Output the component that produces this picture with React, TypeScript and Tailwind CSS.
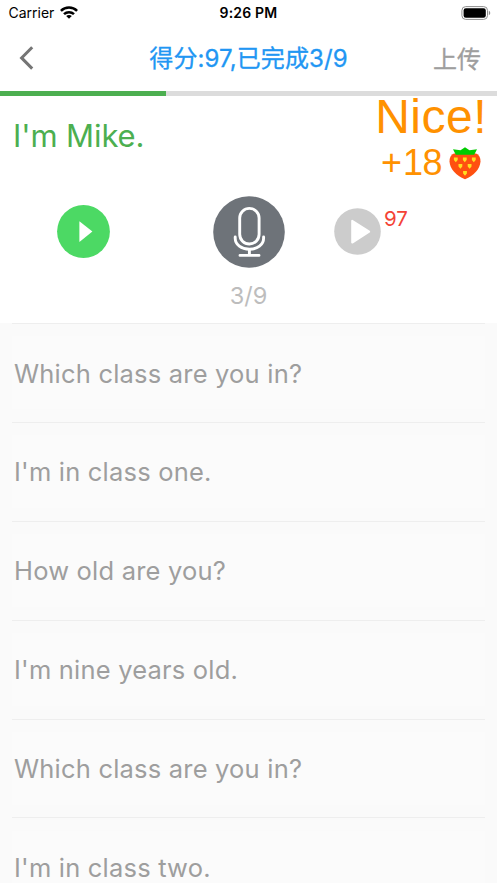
const SENTENCES = [
  'Which class are you in?',
  "I'm in class one.",
  'How old are you?',
  "I'm nine years old.",
  'Which class are you in?',
  "I'm in class two.",
]

const DONE = 3
const TOTAL = 9

export default function App() {
  return (
    <div className="flex h-screen flex-col overflow-hidden bg-[#fafafa] font-['Inter','Noto_Sans_CJK_SC',sans-serif]">
      <StatusBar />

      <header className="flex h-[66px] shrink-0 items-center justify-between bg-white pr-4 pl-[19px]">
        <button className="w-[45px]" aria-label="Back">
          <svg className="h-6 w-4" viewBox="0 0 16 24" fill="none" stroke="#757575" strokeWidth="3">
            <path d="M13.2 1.2L2.6 11.9l10.6 10.7" />
          </svg>
        </button>
        <h1 className="pt-[2px] text-[24px] leading-8 font-normal tracking-[0.1px] whitespace-nowrap text-[#2196f3] [-webkit-text-stroke:0.3px_#2196f3]">
          得分:97,已完成{DONE}/{TOTAL}
        </h1>
        <button className="pt-[4px] text-[24px] leading-8 font-normal whitespace-nowrap text-[#9e9e9e] [-webkit-text-stroke:0.3px_#9e9e9e]">
          上传
        </button>
      </header>

      <div className="h-[5px] shrink-0 bg-[#dcdcdc]">
        <div className="h-full bg-[#4caf50]" style={{ width: `${(DONE / TOTAL) * 100}%` }} />
      </div>

      <Current />

      <ul className="mr-[12px] ml-[12px] shrink-0">
        {SENTENCES.map((text, i) => (
          <li key={i} className="flex h-[98.9px] items-center border-t border-[#eeeeee]">
            <p className="flex h-[73px] w-full items-center bg-[#fbfbfb] pt-[1.5px] pl-[2px] text-[25.5px] tracking-[0.2px] text-[#9e9e9e]">
              {text}
            </p>
          </li>
        ))}
      </ul>
    </div>
  )
}

function StatusBar() {
  return (
    <div className="grid h-[25px] shrink-0 grid-cols-3 items-center bg-white text-[14px] text-black">
      <div className="flex items-center gap-[6px] pl-[8.5px]">
        <span>Carrier</span>
        <svg className="h-[13px] w-[18px]" viewBox="0 0 18 13" fill="none" stroke="#000" strokeWidth="2.5">
          <path d="M.9 4.9C5.4.4 12.6.4 17.1 4.9" />
          <path d="M4 8.2c2.8-2.7 7.2-2.7 10 0" />
          <path d="M9 12.8L6.2 10c1.5-1.4 4.1-1.4 5.6 0z" fill="#000" stroke="none" />
        </svg>
      </div>
      <span className="text-center font-semibold tracking-[0.2px]">9:26 PM</span>
      <div className="flex justify-end pr-[6px]">
        <svg className="h-[14px] w-[30px]" viewBox="0 0 30 14">
          <rect x=".9" y=".6" width="25.6" height="12.8" rx="3.8" fill="none" stroke="#8e8e8e" />
          <rect x="2.6" y="2.3" width="22.2" height="9.4" rx="2.2" />
          <path d="M27.8 4.8c1.9.7 1.9 3.7 0 4.4z" fill="#8e8e8e" />
        </svg>
      </div>
    </div>
  )
}

function Current() {
  return (
    <section className="flex h-[227px] shrink-0 flex-col bg-white">
      <div className="flex h-[99.5px] justify-between pr-[10px] pl-[13px]">
        <p className="pt-[20px] text-[31px] leading-[40px] tracking-[-0.1px] text-[#4caf50]">I'm Mike.</p>
        <div className="flex flex-col items-end font-['Liberation_Sans',sans-serif] text-[#ff9100]">
          <span className="text-[48px] leading-[42px] tracking-[0.5px]">Nice!</span>
          <div className="flex items-center gap-[7px] pr-[6px] text-[36px] leading-[50px]">
            <span>
              <span className="tracking-[1px]">+</span>
              <span className="tracking-[-0.5px]">18</span>
            </span>
            <Strawberry />
          </div>
        </div>
      </div>

      <div className="flex h-[72px] items-center">
        <button className="ml-[56.5px]" aria-label="Play">
          <svg className="size-[53px]" viewBox="0 0 53 53">
            <circle cx="26.5" cy="26.5" r="26.4" fill="#4cd964" />
            <path d="M22.4 16.2v20.8l13-10.4z" fill="#fff" />
          </svg>
        </button>
        <button className="ml-[103px]" aria-label="Record">
          <svg className="size-[72px]" viewBox="0 0 72 72">
            <circle cx="36" cy="36" r="35.8" fill="#6e7379" />
            <g fill="none" stroke="#fff" strokeWidth="2.9" strokeLinecap="round">
              <rect x="26.7" y="12.4" width="19.4" height="35.6" rx="9.7" />
              <path d="M22.2 41v1.3c0 6.4 6.2 11 14.2 11s14.2-4.6 14.2-11V41" />
              <path d="M36.4 53.5v5.7M27 59.4h19" />
            </g>
          </svg>
        </button>
        <button className="ml-[49px]" aria-label="Play recording">
          <svg className="size-[47px]" viewBox="0 0 47 47">
            <circle cx="23.5" cy="23.5" r="23.3" fill="#cccccc" />
            <path d="M18.2 12.8v21.8l17-10.9z" fill="#fff" stroke="#fff" strokeWidth="2" strokeLinejoin="round" />
          </svg>
        </button>
        <span className="mb-[26px] ml-[3.5px] text-[20.5px] leading-6 text-[#f44336]">97</span>
      </div>

      <p className="mt-[12.5px] text-center text-[23.5px] leading-8 text-[#bdbdbd]">
        {DONE}/{TOTAL}
      </p>
    </section>
  )
}

function Strawberry() {
  return (
    <svg className="h-[33px] w-[32px]" viewBox="0 0 32 33">
      <path d="M5 6.5C2 7.5.4 10.5.5 14.5 1 22 7 28.5 16 32.3 25 28.5 31 22 31.5 14.5 31.6 10.5 30 7.5 27 6.5z" fill="#ff5010" />
      <path d="M4 2.2l7.5 1L16 .3l4.5 2.9 7.5-1-2.8 5.6H6.8z" fill="#0c0" />
      <g fill="#ffdf20">
        <path d="M4.9 10.5h3.8v2.6L6.8 15.2l-1.9-2.1zM13.9 10.5h3.8v2.6l-1.9 2.1-1.9-2.1zM22.9 10.5h3.8v2.6l-1.9 2.1-1.9-2.1z" />
        <path d="M9.5 17h3.8v2.6l-1.9 2.1-1.9-2.1zM18.7 17h3.8v2.6l-1.9 2.1-1.9-2.1zM14.1 24h3.8v2.6L16 28.7l-1.9-2.1z" />
      </g>
    </svg>
  )
}
